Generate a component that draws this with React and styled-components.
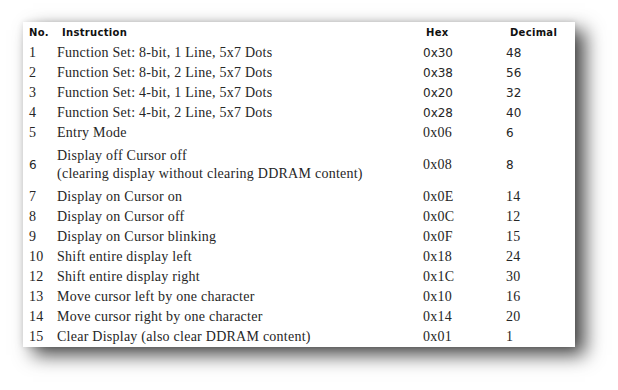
import React from 'react';
import styled, { createGlobalStyle } from 'styled-components';

const GlobalStyle = createGlobalStyle`
  html, body {
    margin: 0;
    padding: 0;
    background: #ffffff;
  }
`;

const Page = styled.div`
  width: 618px;
  height: 390px;
  padding: 22px 0 0 23px;
  box-sizing: border-box;
  background: #ffffff;
  overflow: hidden;
`;

const Card = styled.div`
  width: 552px;
  background: #ffffff;
  box-shadow:
    0 0 6px rgba(0, 0, 0, 0.12),
    10px 8px 18px rgba(0, 0, 0, 0.72);
`;

const Table = styled.table`
  width: 100%;
  border-collapse: collapse;
  table-layout: fixed;
`;

const HeadCell = styled.th`
  height: 21px;
  padding: 0 0 0 ${(p) => p.$indent || 0}px;
  text-align: left;
  vertical-align: middle;
  font-family: 'DejaVu Sans', Verdana, sans-serif;
  font-size: 10px;
  font-weight: bold;
  letter-spacing: 0.3px;
  color: #111;
`;

const Row = styled.tr`
  height: ${(p) => (p.$tall ? 44 : 20)}px;
`;

const Cell = styled.td`
  padding: 0 0 0 ${(p) => p.$indent || 0}px;
  vertical-align: middle;
  font-family: ${(p) =>
    p.$sans
      ? "'DejaVu Sans', Verdana, sans-serif"
      : "'Liberation Serif', 'Times New Roman', serif"};
  font-size: ${(p) => (p.$sans ? '12px' : '14px')};
  letter-spacing: ${(p) => (p.$sans ? '0' : '0.25px')};
  line-height: 18px;
  color: #262626;
  white-space: nowrap;
`;

const rows = [
  ['1', 'Function Set: 8-bit, 1 Line, 5x7 Dots', '0x30', '48', true, true],
  ['2', 'Function Set: 8-bit, 2 Line, 5x7 Dots', '0x38', '56', true, true],
  ['3', 'Function Set: 4-bit, 1 Line, 5x7 Dots', '0x20', '32', true, true],
  ['4', 'Function Set: 4-bit, 2 Line, 5x7 Dots', '0x28', '40', true, true],
  ['5', 'Entry Mode', '0x06', '6', false, true],
  ['6', ['Display off Cursor off', '(clearing display without clearing DDRAM content)'], '0x08', '8', false, true],
  ['7', 'Display on Cursor on', '0x0E', '14'],
  ['8', 'Display on Cursor off', '0x0C', '12'],
  ['9', 'Display on Cursor blinking', '0x0F', '15'],
  ['10', 'Shift entire display left', '0x18', '24'],
  ['12', 'Shift entire display right', '0x1C', '30'],
  ['13', 'Move cursor left by one character', '0x10', '16'],
  ['14', 'Move cursor right by one character', '0x14', '20'],
  ['15', 'Clear Display (also clear DDRAM content)', '0x01', '1'],
];

export default function App() {
  return (
    <>
      <GlobalStyle />
      <Page>
        <Card>
          <Table>
            <colgroup>
              <col style={{ width: 34 }} />
              <col style={{ width: 366 }} />
              <col style={{ width: 83 }} />
              <col style={{ width: 69 }} />
            </colgroup>
            <thead>
              <tr>
                <HeadCell $indent={6}>No.</HeadCell>
                <HeadCell $indent={5}>Instruction</HeadCell>
                <HeadCell $indent={3}>Hex</HeadCell>
                <HeadCell $indent={4}>Decimal</HeadCell>
              </tr>
            </thead>
            <tbody>
              {rows.map(([no, text, hex, dec, sansHex, sansDec]) => (
                <Row key={no} $tall={Array.isArray(text)}>
                  <Cell $indent={6} $sans={no === '6'}>{no}</Cell>
                  <Cell>
                    {Array.isArray(text) ? (
                      <>
                        {text[0]}
                        <br />
                        {text[1]}
                      </>
                    ) : (
                      text
                    )}
                  </Cell>
                  <Cell $sans={sansHex}>{hex}</Cell>
                  <Cell $sans={sansDec}>{dec}</Cell>
                </Row>
              ))}
            </tbody>
          </Table>
        </Card>
      </Page>
    </>
  );
}
